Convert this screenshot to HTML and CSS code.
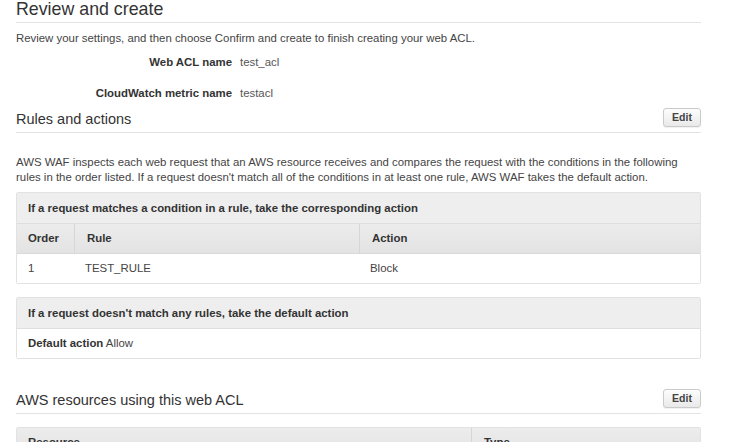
FILE: index.html
```html
<!DOCTYPE html>
<html lang="en">
<head>
<meta charset="utf-8">
<title>Review and create</title>
<link rel="stylesheet" href="styles.css">
</head>
<body>
<div class="page">
  <h1 class="title">Review and create</h1>
  <p class="desc">Review your settings, and then choose Confirm and create to finish creating your web ACL.</p>

  <div class="kv">
    <div class="kv-label">Web ACL name</div>
    <div class="kv-value">test_acl</div>
    <div class="kv-label">CloudWatch metric name</div>
    <div class="kv-value">testacl</div>
  </div>

  <div class="section-head">
    <h2 class="section-title">Rules and actions</h2>
    <button class="edit-btn">Edit</button>
  </div>

  <p class="para">AWS WAF inspects each web request that an AWS resource receives and compares the request with the conditions in the following<br>rules in the order listed. If a request doesn't match all of the conditions in at least one rule, AWS WAF takes the default action.</p>

  <table class="grid rules">
    <colgroup>
      <col class="c-order">
      <col class="c-rule">
      <col>
    </colgroup>
    <thead>
      <tr class="cap-row"><th colspan="3">If a request matches a condition in a rule, take the corresponding action</th></tr>
      <tr class="head-row"><th>Order</th><th class="div">Rule</th><th class="div">Action</th></tr>
    </thead>
    <tbody>
      <tr class="body-row"><td>1</td><td>TEST_RULE</td><td>Block</td></tr>
    </tbody>
  </table>

  <table class="grid default">
    <thead>
      <tr class="cap-row"><th>If a request doesn't match any rules, take the default action</th></tr>
    </thead>
    <tbody>
      <tr class="body-row last"><td><strong>Default action</strong> Allow</td></tr>
    </tbody>
  </table>

  <div class="section-head res-head">
    <h2 class="section-title">AWS resources using this web ACL</h2>
    <button class="edit-btn">Edit</button>
  </div>

  <table class="grid resources">
    <colgroup>
      <col class="c-resource">
      <col>
    </colgroup>
    <thead>
      <tr class="head-row"><th>Resource</th><th class="div">Type</th></tr>
    </thead>
  </table>
</div>
</body>
</html>
```
FILE: styles.css
```css
* { box-sizing: border-box; }

html, body {
  margin: 0;
  padding: 0;
  background: #ffffff;
}

body {
  font-family: "Liberation Sans", Arial, Helvetica, sans-serif;
  font-size: 11.4px;
  color: #444444;
}

.page {
  width: 730px;
  padding: 0 29px 0 16px;
}

.title {
  margin: 0;
  font-size: 17.8px;
  font-weight: normal;
  line-height: 19px;
  color: #333333;
  padding-bottom: 3px;
  border-bottom: 1px solid #e3e3e3;
}

.desc {
  margin: 8px 0 0;
  line-height: 15px;
  color: #444444;
}

.kv {
  display: grid;
  grid-template-columns: 216px auto;
  column-gap: 8px;
  grid-auto-rows: 31px;
  align-items: center;
}

.kv-label {
  text-align: right;
  font-weight: bold;
  color: #333333;
}

.kv-value {
  color: #555555;
}

.section-head {
  display: flex;
  justify-content: space-between;
  align-items: flex-end;
  padding-bottom: 5px;
  border-bottom: 1px solid #e3e3e3;
}

.section-title {
  margin: 0;
  font-size: 14.5px;
  font-weight: normal;
  line-height: 16px;
  color: #333333;
}

.edit-btn {
  width: 38px;
  height: 19px;
  padding: 0;
  border: 1px solid #cacaca;
  border-radius: 3px;
  background: linear-gradient(#fdfdfd, #e9e9e9);
  box-shadow: 0 1px 1px rgba(0, 0, 0, 0.06);
  font-family: "Liberation Sans", Arial, Helvetica, sans-serif;
  font-size: 10.5px;
  font-weight: bold;
  color: #444444;
  line-height: 17px;
}

.para {
  margin: 22px 0 0;
  line-height: 15px;
  color: #444444;
}

.grid {
  width: 685px;
  table-layout: fixed;
  border-collapse: separate;
  border-spacing: 0;
  border: 1px solid #e2e2e2;
  border-radius: 2px;
}

.grid th,
.grid td {
  padding: 0 11px;
  text-align: left;
  white-space: nowrap;
}

.rules { margin-top: 7px; }

.c-order { width: 57px; }
.c-rule { width: 285px; }
.c-resource { width: 454px; }

.cap-row th {
  background: #eeeeee;
  line-height: 30px;
  font-weight: bold;
  color: #333333;
  border-bottom: 1px solid #dedede;
}

.head-row th {
  background: linear-gradient(#ececec, #e3e3e3);
  line-height: 29px;
  font-weight: bold;
  color: #333333;
  border-bottom: 1px solid #d9d9d9;
}

.head-row th.div {
  border-left: 1px solid #d6d6d6;
  padding-left: 12px;
}

.body-row td {
  background: #ffffff;
  line-height: 29px;
  color: #444444;
}

.body-row td strong {
  color: #333333;
}

.default { margin-top: 13px; }

.res-head { margin-top: 30px; }

.resources { margin-top: 13px; }
```
